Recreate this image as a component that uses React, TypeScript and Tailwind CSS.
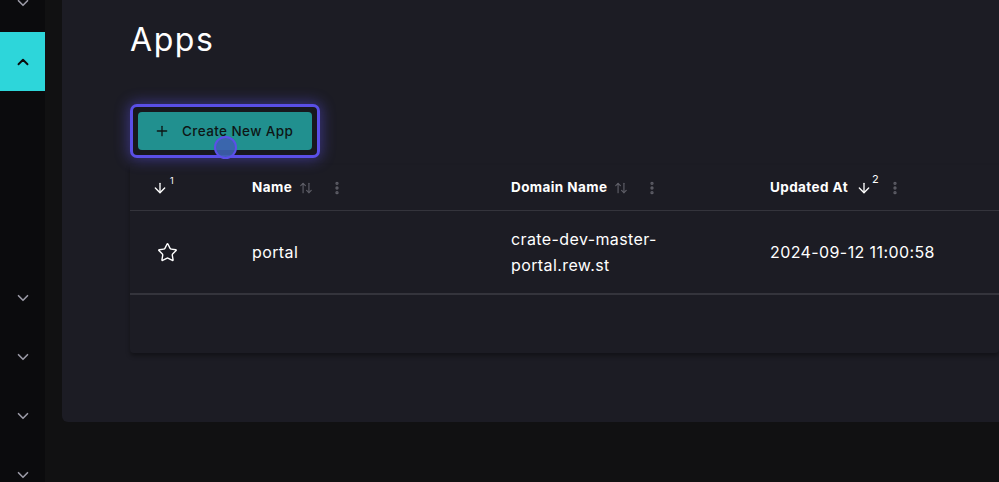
import { ChevronDown, ChevronUp, Plus, Star, ArrowDown, ArrowUpDown, EllipsisVertical } from 'lucide-react';

const FONT = { fontFamily: 'Inter, "Noto Sans", sans-serif' };

function SideRow({ open, active, show = true }: { open?: boolean; active?: boolean; show?: boolean }) {
  return (
    <div className={`h-[59px] shrink-0 flex items-center justify-center ${active ? 'bg-[#2dd6da]' : ''}`}>
      {show &&
        (open ? (
          <ChevronUp className="h-[18px] w-[18px] text-[#0b0b0d]" strokeWidth={2.5} />
        ) : (
          <ChevronDown className="h-[18px] w-[18px] text-[#9b9aa6]" strokeWidth={2.2} />
        ))}
    </div>
  );
}

function HeadCell({ label, sortIcon, badge }: { label: string; sortIcon: 'both' | 'down'; badge?: string }) {
  return (
    <div className="flex items-center text-[13.5px] font-bold tracking-[0.03em] text-white">
      <span>{label}</span>
      {sortIcon === 'both' ? (
        <>
          <ArrowUpDown className="ml-[7px] h-[14px] w-[14px] text-[#5d5d66]" strokeWidth={2} />
          <EllipsisVertical className="ml-[16px] h-4 w-4 text-[#5d5d66]" strokeWidth={3} />
        </>
      ) : (
        <>
          <span className="ml-[8px] flex items-start">
            <ArrowDown className="h-[16px] w-[16px] text-white" strokeWidth={2} />
            <span className="-mt-[6px] text-[11px] font-normal leading-none">{badge}</span>
          </span>
          <EllipsisVertical className="ml-[8px] h-4 w-4 text-[#5d5d66]" strokeWidth={3} />
        </>
      )}
    </div>
  );
}

export default function App() {
  return (
    <div className="flex h-[482px] w-[999px] overflow-hidden bg-[#111112]" style={FONT}>
      {/* Sidebar */}
      <aside className="w-[45px] shrink-0 bg-[#0b0b0d] flex flex-col -mt-[27px]">
        <SideRow />
        <SideRow open active />
        <SideRow show={false} />
        <SideRow show={false} />
        <SideRow show={false} />
        <SideRow />
        <SideRow />
        <SideRow />
        <SideRow />
      </aside>

      {/* Main */}
      <main className="flex-1 pl-[17px]">
        <section className="h-[422px] bg-[#1c1c24] rounded-bl-md pl-[68px] pt-[20px] relative">
          <h1 className="text-[32px] leading-[40px] font-normal text-white tracking-[0.05em]">Apps</h1>

          {/* Create button */}
          <div className="mt-[44px] relative w-fit">
            <div className="rounded-[7px] border-[3px] border-[#5a4fe6] bg-[#18181e] p-[5px] shadow-[0_0_14px_2px_rgba(90,79,230,0.45)] w-fit">
              <button
                type="button"
                className="flex h-[38px] w-[174px] items-center gap-[12px] rounded-[4px] bg-[#21908f] pl-[16px] text-[13.5px] font-medium tracking-[0.03em] text-[#0e1616]"
              >
                <Plus className="h-[16px] w-[16px]" strokeWidth={2} />
                Create New App
              </button>
            </div>
            <span className="absolute left-[84px] top-[32px] h-[23px] w-[23px] rounded-full border-2 border-[#5b4fe8] bg-[#3d62b0]/90" />
          </div>

          {/* Table */}
          <div className="mt-[7px] rounded-b-sm shadow-[0_3px_4px_rgba(0,0,0,0.35)]">
            <div className="grid grid-cols-[122px_259px_259px_1fr] h-[46px] items-center border-b border-[#34343c]">
              <div className="pl-[22px] flex items-start text-white">
                <ArrowDown className="h-[16px] w-[16px]" strokeWidth={2} />
                <span className="ml-[2px] -mt-[4px] text-[9px] leading-none">1</span>
              </div>
              <HeadCell label="Name" sortIcon="both" />
              <HeadCell label="Domain Name" sortIcon="both" />
              <HeadCell label="Updated At" sortIcon="down" badge="2" />
            </div>
            <div className="grid grid-cols-[122px_259px_259px_1fr] h-[84px] items-center border-b-2 border-[#34343c] text-[16px] tracking-[0.025em] text-white">
              <div className="pl-[27px]">
                <Star className="h-[21px] w-[21px]" strokeWidth={1.6} />
              </div>
              <div>portal</div>
              <div className="leading-[26px]">
                crate-dev-master-
                <br />
                portal.rew.st
              </div>
              <div>2024-09-12 11:00:58</div>
            </div>
            <div className="h-[58px]" />
          </div>
        </section>
      </main>
    </div>
  );
}
